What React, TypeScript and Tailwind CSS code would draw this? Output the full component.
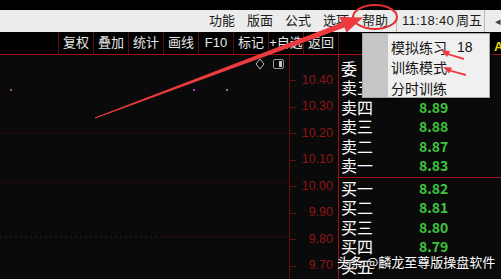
import React from "react";

const menus = ["功能", "版面", "公式", "选项"];
const tools = ["复权", "叠加", "统计", "画线", "F10", "标记", "+自选", "返回"];
const prices = ["10.40", "10.30", "10.20", "10.10", "10.00", "9.90", "9.80", "9.70"];

const sells = [
  { label: "委", price: "" },
  { label: "卖五", price: "" },
  { label: "卖四", price: "8.89" },
  { label: "卖三", price: "8.88" },
  { label: "卖二", price: "8.87" },
  { label: "卖一", price: "8.83" },
];

const buys = [
  { label: "买一", price: "8.82" },
  { label: "买二", price: "8.81" },
  { label: "买三", price: "8.80" },
  { label: "买四", price: "8.79" },
  { label: "买五", price: "" },
];

function BookRow({ label, price }: { label: string; price: string }) {
  return (
    <div className="flex h-[19.5px] items-center">
      <span className="w-[80px] pl-[2px] text-[16px] leading-none text-white">{label}</span>
      <span className="text-[14px] font-bold leading-none text-[#3ec43e]">{price}</span>
    </div>
  );
}

export default function App() {
  return (
    <div className="relative h-[279px] w-[501px] overflow-hidden bg-[#0a0a0a] font-['Liberation_Sans','Noto_Sans_CJK_SC',sans-serif]">
      {/* window top */}
      <div className="h-[10px] bg-black" />

      {/* menu bar */}
      <div className="flex h-[22px] items-center whitespace-nowrap bg-[#ececec] text-[13px] text-[#1a1a1a]">
        <div className="ml-[209px] flex gap-[12px]">
          {menus.map((m) => (
            <span key={m} className="w-[26px]">{m}</span>
          ))}
        </div>
        <span className="ml-[13px] w-[34px] shrink-0">帮助</span>
        <div className="h-full border-l border-[#b8b8b8]" />
        <span className="ml-[5px] w-[54px] shrink-0 tracking-[0.3px]">11:18:40</span>
        <span className="w-[28px] shrink-0">周五</span>
        <div className="h-full border-l border-[#b8b8b8]" />
        <span className="ml-[10px] text-[11px] text-[#444]">◂</span>
      </div>

      {/* toolbar */}
      <div className="flex h-[23px] items-center border-b border-[#a01010] bg-black pl-[58px] text-[13px] text-[#e6e6e6]">
        {tools.map((t) => (
          <div
            key={t}
            className="flex h-full w-[35px] items-center justify-center border-l border-[#5a0e0e]"
          >
            {t}
          </div>
        ))}
        <div className="h-full border-l border-[#5a0e0e]" />
      </div>

      {/* main */}
      <div className="flex h-[224px]">
        {/* chart */}
        <div className="relative w-[289px]">
          <svg width="289" height="224" className="absolute left-0 top-0">
            <line x1="0" y1="78" x2="289" y2="78" stroke="#2a0808" strokeWidth="1" />
            <line x1="0" y1="128" x2="289" y2="128" stroke="#3a0a0a" strokeWidth="1" strokeDasharray="2 2" />
            <line x1="0" y1="182" x2="160" y2="182" stroke="#2a2a2a" strokeWidth="1" strokeDasharray="2 3" />
            <line x1="160" y1="182" x2="289" y2="182" stroke="#2a0a10" strokeWidth="1" />
            <rect x="10" y="34" width="2" height="2" fill="#a04aa0" />
            <rect x="193" y="34" width="2" height="2" fill="#b040c0" />
            <rect x="226" y="34" width="2" height="2" fill="#a070a0" />
            <polygon points="260,4 264,9 260,14 256,9" fill="none" stroke="#bdbdbd" strokeWidth="1" />
            <rect x="273.5" y="4.5" width="10" height="9" rx="1.5" fill="none" stroke="#9a9a9a" />
            <rect x="279" y="6" width="3" height="6" fill="#c8c8c8" />
          </svg>
        </div>

        {/* price axis */}
        <div className="w-[49px] border-l border-[#6a0c0c] pr-[5px] pt-[12px]">
          {prices.map((p) => (
            <div key={p} className="relative flex h-[26.5px] items-center justify-end text-[12.5px] text-[#8e1616]">
              <div className="absolute left-0 top-1/2 w-[6px] border-t border-[#6a0c0c]" />
              {p}
            </div>
          ))}
        </div>

        {/* order book */}
        <div className="flex-1 border-l border-[#a01010] font-['Noto_Sans_CJK_SC','Liberation_Sans',sans-serif]">
          <div className="pt-[3px]">
            {sells.map((r) => (
              <BookRow key={r.label} {...r} />
            ))}
          </div>
          <div className="mt-[2px] border-t border-[#a01010]">
            {buys.map((r) => (
              <BookRow key={r.label} {...r} />
            ))}
          </div>
        </div>
      </div>

      {/* yellow letter at edge */}
      <span className="absolute left-[494px] top-[37px] text-[13px] font-bold text-[#e8d200]">A</span>

      {/* dropdown */}
      <div className="absolute left-[362px] top-[33px] flex h-[65px] w-[128px] border border-[#a8a8a8] bg-[#f0f0f0] shadow-[2px_2px_2px_rgba(0,0,0,0.5)]">
        <div className="w-[25px] bg-[#c6c6c6]" />
        <div className="flex-1 pl-[3px] pt-[3px] font-['Noto_Sans_CJK_SC',sans-serif] text-[14px] text-[#141414]">
          <div className="flex h-[20.5px] items-center">
            <span className="w-[66px]">模拟练习</span>
            <span className="font-['Liberation_Sans',sans-serif]">18</span>
          </div>
          <div className="flex h-[20.5px] items-center">训练模式</div>
          <div className="flex h-[20.5px] items-center">分时训练</div>
        </div>
      </div>

      {/* watermark */}
      <div className="absolute left-[337px] top-[255px] whitespace-nowrap font-['Noto_Sans_CJK_SC',sans-serif] text-[13px] leading-none text-white [text-shadow:0_0_2px_rgba(0,0,0,0.9)]">
        头条 @麟龙至尊版操盘软件
      </div>

      {/* annotations */}
      <svg width="501" height="279" className="pointer-events-none absolute left-0 top-0">
        <ellipse cx="375" cy="17" rx="22" ry="12" fill="none" stroke="#e23030" strokeWidth="2" />
        <polygon
          points="94.8,117.5 342,22.5 339.5,17 363,17.5 346.5,32.5 344.5,27.5 95.2,118.5"
          fill="#ec3a3e"
        />
        <polygon points="464,58 449,53.5 450,51 441,50 447,57 448,55 464,60" fill="#ec3a3e" />
        <polygon points="466,74 451,70 452,67.5 443,67 449,73.5 450,71.5 466,76" fill="#ec3a3e" />
      </svg>
    </div>
  );
}
